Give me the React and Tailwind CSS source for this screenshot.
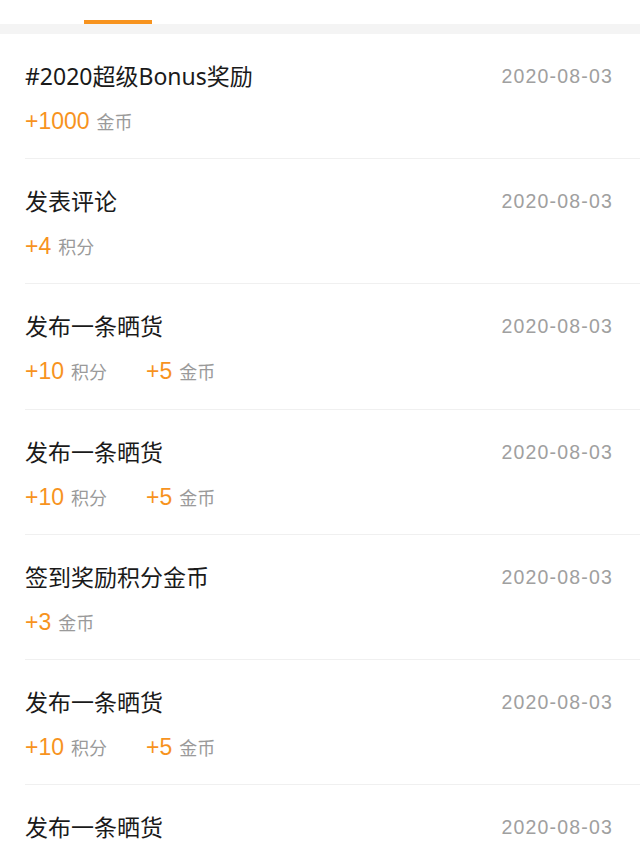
const records = [
  { title: '#2020超级Bonus奖励', date: '2020-08-03', rewards: [{ value: '+1000', unit: '金币' }] },
  { title: '发表评论', date: '2020-08-03', rewards: [{ value: '+4', unit: '积分' }] },
  { title: '发布一条晒货', date: '2020-08-03', rewards: [{ value: '+10', unit: '积分' }, { value: '+5', unit: '金币' }] },
  { title: '发布一条晒货', date: '2020-08-03', rewards: [{ value: '+10', unit: '积分' }, { value: '+5', unit: '金币' }] },
  { title: '签到奖励积分金币', date: '2020-08-03', rewards: [{ value: '+3', unit: '金币' }] },
  { title: '发布一条晒货', date: '2020-08-03', rewards: [{ value: '+10', unit: '积分' }, { value: '+5', unit: '金币' }] },
  { title: '发布一条晒货', date: '2020-08-03', rewards: [{ value: '+10', unit: '积分' }, { value: '+5', unit: '金币' }] },
];

const font = { fontFamily: "'Liberation Sans', 'Noto Sans CJK SC', sans-serif" };
const titleFont = { fontFamily: "'Noto Sans', 'Noto Sans CJK SC', sans-serif" };

export default function App() {
  return (
    <div className="w-[640px] h-[853px] overflow-hidden bg-white" style={font}>
      {/* tab strip, only the active underline is visible */}
      <div className="h-[24px] bg-white flex items-end">
        <div className="ml-[84px] w-[68px] h-[4px] bg-[#f7931e]" />
      </div>
      <div className="h-[10px] bg-[#f4f4f4]" />

      <div>
        {records.map((r, i) => (
          <div key={i} className="pl-[25px]">
            <div className="h-[125.2px] pr-[27px] pt-[27px] border-b border-[#f0f0f0]">
              <div className="flex items-center justify-between h-[30px]">
                <span className="text-[23px] text-[#1a1a1a] leading-[30px]" style={titleFont}>{r.title}</span>
                <span className="text-[19.5px] text-[#a0a0a0] tracking-[0.06em] leading-[30px]">{r.date}</span>
              </div>
              <div className="flex items-center gap-[39px] mt-[16px] h-[30px]">
                {r.rewards.map((w, j) => (
                  <div key={j} className="flex items-baseline gap-[7px]">
                    <span className="text-[23px] text-[#f7931e] leading-[30px]">{w.value}</span>
                    <span className="text-[18px] text-[#9a9a9a] leading-[30px]">{w.unit}</span>
                  </div>
                ))}
              </div>
            </div>
          </div>
        ))}
      </div>
    </div>
  );
}
